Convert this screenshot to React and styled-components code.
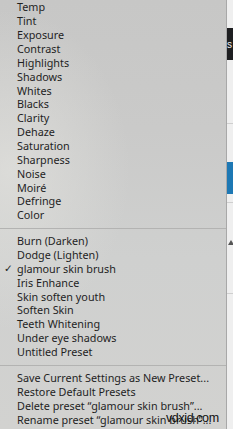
import React from "react";
import styled, { createGlobalStyle } from "styled-components";

const GlobalStyle = createGlobalStyle`
  html, body { margin: 0; padding: 0; background: #ececec; overflow: hidden; }
  #root { width: 233px; height: 429px; }
`;

const Page = styled.div`
  position: relative;
  display: flex;
  width: 233px;
  height: 429px;
  overflow: hidden;
  font-family: "Noto Sans", "Open Sans", Arial, sans-serif;
`;

const Menu = styled.div`
  flex: 0 0 227px;
  height: 429px;
  overflow: hidden;
  box-sizing: border-box;
  border-right: 1px solid #a8a8a8;
  background:
    radial-gradient(ellipse 120px 160px at 10px 170px, rgba(226, 226, 222, 0.7), rgba(226, 226, 222, 0) 100%),
    linear-gradient(180deg, #c7c7c6 0%, #cacac9 30%, #cfd0cf 60%, #d2d2d0 100%);
`;

const Row = styled.div`
  display: flex;
  align-items: center;
  height: 13.87px;
  font-size: 10.8px;
  color: #1f1f1f;
  white-space: nowrap;
`;

const Check = styled.span`
  flex: 0 0 17px;
  box-sizing: border-box;
  padding-left: 4px;
  font-size: 10.5px;
  font-family: "DejaVu Sans", sans-serif;
  color: #1f1f1f;
`;

const Separator = styled.div`
  height: 1px;
  margin: 6.5px 0 4.5px;
  background: #b3b3b2;
`;

const Strip = styled.div`
  flex: 1;
  display: flex;
  flex-direction: column;
  background: #efefef;
`;

const StripGap = styled.div`
  height: ${(p) => p.$h}px;
  flex: 0 0 auto;
`;

const DarkBlock = styled.div`
  height: 32px;
  flex: 0 0 auto;
  background: #1e1f21;
  color: #f0f0f0;
  font-size: 10px;
  display: flex;
  align-items: center;
  overflow: hidden;
  font-family: "Liberation Sans", sans-serif;
`;

const BlueBlock = styled.div`
  height: 32px;
  flex: 0 0 auto;
  background: #1d78b4;
`;

const Line = styled.div`
  height: 1px;
  flex: 0 0 auto;
  background: #cfcfcf;
`;

const Tri = styled.div`
  width: 0;
  height: 0;
  margin-left: 1px;
  border-left: 3px solid transparent;
  border-right: 3px solid transparent;
  border-bottom: 5px solid #555;
`;

const Watermark = styled.div`
  position: absolute;
  left: 166px;
  top: 411px;
  font-family: "Liberation Sans", Arial, sans-serif;
  font-size: 12.5px;
  color: #111;
  letter-spacing: -0.4px;
`;

const groups = [
  [
    "Temp", "Tint", "Exposure", "Contrast", "Highlights", "Shadows", "Whites",
    "Blacks", "Clarity", "Dehaze", "Saturation", "Sharpness", "Noise",
    "Moiré", "Defringe", "Color",
  ],
  [
    "Burn (Darken)", "Dodge (Lighten)", "glamour skin brush", "Iris Enhance",
    "Skin soften youth", "Soften Skin", "Teeth Whitening", "Under eye shadows",
    "Untitled Preset",
  ],
  [
    "Save Current Settings as New Preset...",
    "Restore Default Presets",
    "Delete preset \u201Cglamour skin brush\u201D...",
    "Rename preset \u201Cglamour skin brush\u201D...",
  ],
];

export default function App() {
  return (
    <>
      <GlobalStyle />
      <Page>
        <Menu>
          {groups.map((g, gi) => (
            <React.Fragment key={gi}>
              {gi > 0 && <Separator />}
              {g.map((label) => (
                <Row key={label}>
                  <Check>{label === "glamour skin brush" ? "✓" : ""}</Check>
                  {label}
                </Row>
              ))}
            </React.Fragment>
          ))}
        </Menu>
        <Strip>
          <StripGap $h={28} />
          <DarkBlock>s</DarkBlock>
          <StripGap $h={63} />
          <Line />
          <StripGap $h={38} />
          <BlueBlock />
          <StripGap $h={8} />
          <Line />
          <StripGap $h={37} />
          <Tri />
          <StripGap $h={48} />
          <Line />
        </Strip>
        <Watermark>vdxid.com</Watermark>
      </Page>
    </>
  );
}
